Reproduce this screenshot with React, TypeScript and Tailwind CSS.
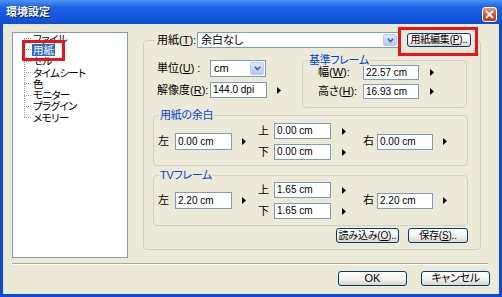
import type { ReactNode } from 'react';

const jp =
  "font-['Liberation_Sans','Noto_Sans_CJK_JP',sans-serif] [font-feature-settings:'palt']";

const treeItems = [
  'ファイル',
  '用紙',
  'セル',
  'タイムシート',
  '色',
  'モニター',
  'プラグイン',
  'メモリー',
];

function Arrow({ className = '' }: { className?: string }) {
  return (
    <svg width="4" height="7" viewBox="0 0 4 7" className={`shrink-0 ${className}`}>
      <path d="M0 0L4 3.5L0 7Z" fill="#000" />
    </svg>
  );
}

function TextBox({ value, className }: { value: string; className: string }) {
  return (
    <div
      className={`flex shrink-0 items-center border border-[#7F9DB9] bg-white pl-[2px] text-[10px] leading-none ${className}`}
    >
      {value}
    </div>
  );
}

function ComboBox({ value, className }: { value: string; className: string }) {
  return (
    <div
      className={`flex shrink-0 items-stretch border border-[#7F9DB9] bg-white p-[1px] ${className}`}
    >
      <span className="flex flex-1 items-center pl-[2px] text-[11px] leading-none">{value}</span>
      <div className="flex w-[14px] items-center justify-center rounded-[2px] border border-[#B9CEF5] bg-linear-to-b from-[#DCE6FD] to-[#B4C8F6]">
        <svg width="7" height="5" viewBox="0 0 7 5">
          <path d="M0.8 0.8L3.5 3.6L6.2 0.8" stroke="#4D6185" strokeWidth="1.6" fill="none" />
        </svg>
      </div>
    </div>
  );
}

function XpButton({ className, children }: { className: string; children: ReactNode }) {
  return (
    <button
      className={`flex shrink-0 items-center justify-center whitespace-nowrap rounded-[3px] border border-[#003C74] bg-linear-to-b from-white via-[#F4F3EE] to-[#DCD8CB] leading-none ${className}`}
    >
      {children}
    </button>
  );
}

function GroupBox({
  title,
  className,
  children,
}: {
  title: string;
  className: string;
  children: ReactNode;
}) {
  return (
    <div className={`relative rounded-[4px] border border-[#D0D0BF] ${className}`}>
      <span className="absolute left-[5px] top-[-7px] bg-[#ECE9D8] px-[1px] text-[11px] leading-[12px] tracking-[-0.3px] text-[#0046D5]">
        {title}
      </span>
      {children}
    </div>
  );
}

// 上・下 の2段入力
function PairRows({ top, bottom }: { top: string; bottom: string }) {
  return (
    <div className="ml-[12px] flex flex-col gap-[5px]">
      <div className="flex items-center">
        <span className="w-[11px]">上</span>
        <TextBox value={top} className="ml-[5px] h-[16px] w-[57px]" />
        <Arrow className="ml-[11px]" />
      </div>
      <div className="flex items-center">
        <span className="w-[11px]">下</span>
        <TextBox value={bottom} className="ml-[5px] h-[16px] w-[57px]" />
        <Arrow className="ml-[11px]" />
      </div>
    </div>
  );
}

function Tree() {
  return (
    <div className="relative h-[226px] w-[116px] shrink-0 border border-[#7F9DB9] bg-white text-[10.5px] tracking-[-0.6px]">
      <div className="absolute left-[11px] top-[6px] h-[78px] border-l border-dotted border-[#A0A0A0]" />
      {treeItems.map((item) => (
        <div key={item} className="flex h-[11.3px] items-center">
          <span className="ml-[11px] w-[7px] border-t border-dotted border-[#A0A0A0]" />
          <span
            className={
              item === '用紙'
                ? 'ml-[1px] bg-[#316AC5] px-[1px] leading-[12px] tracking-normal text-white'
                : 'ml-[1px] px-[1px] leading-[12px]'
            }
          >
            {item}
          </span>
        </div>
      ))}
    </div>
  );
}

export default function App() {
  return (
    <div className={`relative flex h-[297px] w-[502px] flex-col overflow-hidden bg-[#0A4BD4] ${jp}`}>
      {/* タイトルバー */}
      <div className="flex h-[24px] shrink-0 items-start bg-linear-to-b from-[#4B95F6] via-[#1C61E3] via-30% to-[#0A4FD5]">
        <span className="ml-[6px] mt-[5px] text-[11px] font-bold leading-[14px] text-white [text-shadow:1px_1px_0_#0A1E7A]">
          環境設定
        </span>
        <div className="ml-auto mr-[5px] mt-[7px] flex h-[15px] w-[15px] items-center justify-center rounded-[3px] border border-white bg-linear-to-b from-[#EB9A7E] via-[#D9532C] to-[#C2390F]">
          <svg width="9" height="9" viewBox="0 0 9 9">
            <path d="M1 1L8 8M8 1L1 8" stroke="#fff" strokeWidth="1.8" />
          </svg>
        </div>
      </div>

      {/* 本体 */}
      <div className="mx-[3px] mb-[3px] flex flex-1 flex-col bg-[#ECE9D8] px-[9px] pt-[8px] text-[11px] leading-[13px] text-black">
        <div className="flex items-start">
          <Tree />

          <div className="ml-[15px] w-[338px] pt-[8px]">
            <div className="relative rounded-[4px] border border-[#D0D0BF] pb-[6px] pl-[9px] pr-[12px] pt-[19px]">
              {/* 用紙 行 */}
              <div className="absolute left-[10px] top-[-9px] flex h-[16px] items-center bg-[#ECE9D8] pl-[3px] pr-[2px]">
                <span className="w-[40px]">
                  用紙(<u>T</u>):
                </span>
                <ComboBox value="余白なし" className="h-[16px] w-[202px]" />
                <XpButton className="ml-[8px] h-[14px] w-[64px] text-[10px] tracking-[-0.2px]">
                  用紙編集(<u>P</u>)..
                </XpButton>
              </div>

              <div className="flex">
                <div className="w-[149px] pl-[4px]">
                  <div className="flex h-[17px] items-center">
                    <span className="w-[53px]">
                      単位(<u>U</u>) :
                    </span>
                    <ComboBox value="cm" className="h-[17px] w-[56px]" />
                  </div>
                  <div className="mt-[5px] flex items-center">
                    <span className="w-[53px]">
                      解像度(<u>R</u>):
                    </span>
                    <TextBox value="144.0 dpi" className="h-[16px] w-[57px]" />
                    <Arrow className="ml-[10px]" />
                  </div>
                </div>

                <GroupBox title="基準フレーム" className="h-[48px] w-[165px] pl-[15px] pt-[4px]">
                  <div className="flex items-center">
                    <span className="w-[45px]">
                      幅(<u>W</u>):
                    </span>
                    <TextBox value="22.57 cm" className="h-[15px] w-[56px]" />
                    <Arrow className="ml-[11px]" />
                  </div>
                  <div className="mt-[4px] flex items-center">
                    <span className="w-[45px]">
                      高さ(<u>H</u>):
                    </span>
                    <TextBox value="16.93 cm" className="h-[15px] w-[56px]" />
                    <Arrow className="ml-[11px]" />
                  </div>
                </GroupBox>
              </div>

              {/* 用紙の余白 */}
              <GroupBox title="用紙の余白" className="mt-[7px] flex items-center pb-[5px] pl-[4px] pt-[7px]">
                <span className="w-[11px]">左</span>
                <TextBox value="0.00 cm" className="ml-[6px] h-[17px] w-[57px]" />
                <Arrow className="ml-[10px]" />
                <PairRows top="0.00 cm" bottom="0.00 cm" />
                <span className="ml-[17px] w-[11px]">右</span>
                <TextBox value="0.00 cm" className="ml-[3px] h-[16px] w-[56px]" />
                <Arrow className="ml-[10px]" />
              </GroupBox>

              {/* TVフレーム */}
              <GroupBox title="TVフレーム" className="mt-[9px] flex items-center pb-[6px] pl-[4px] pt-[6px]">
                <span className="w-[11px]">左</span>
                <TextBox value="2.20 cm" className="ml-[6px] h-[17px] w-[57px]" />
                <Arrow className="ml-[10px]" />
                <PairRows top="1.65 cm" bottom="1.65 cm" />
                <span className="ml-[17px] w-[11px]">右</span>
                <TextBox value="2.20 cm" className="ml-[3px] h-[16px] w-[56px]" />
                <Arrow className="ml-[10px]" />
              </GroupBox>

              <div className="mt-[2px] flex justify-end gap-[9px]">
                <XpButton className="h-[15px] w-[63px] text-[10px] tracking-[-0.2px]">
                  読み込み(<u>O</u>)..
                </XpButton>
                <XpButton className="h-[15px] w-[60px] text-[10px] tracking-[-0.2px]">
                  保存(<u>S</u>)..
                </XpButton>
              </div>
            </div>
          </div>
        </div>

        <div className="mr-[2px] mt-[5px] h-[2px] border-b border-t border-b-white border-t-[#ACA899]" />

        <div className="mt-[6px] flex justify-end gap-[14px]">
          <XpButton className="h-[15px] w-[69px] text-[11px]">OK</XpButton>
          <XpButton className="h-[15px] w-[69px] text-[11px] tracking-[-0.3px]">キャンセル</XpButton>
        </div>
      </div>

      {/* 注釈の赤枠 */}
      <div className="absolute left-[22px] top-[40px] h-[21px] w-[43px] border-[3px] border-[#E8141C]" />
      <div className="absolute left-[398px] top-[27px] h-[29px] w-[80px] border-[3px] border-[#E8141C]" />
    </div>
  );
}
